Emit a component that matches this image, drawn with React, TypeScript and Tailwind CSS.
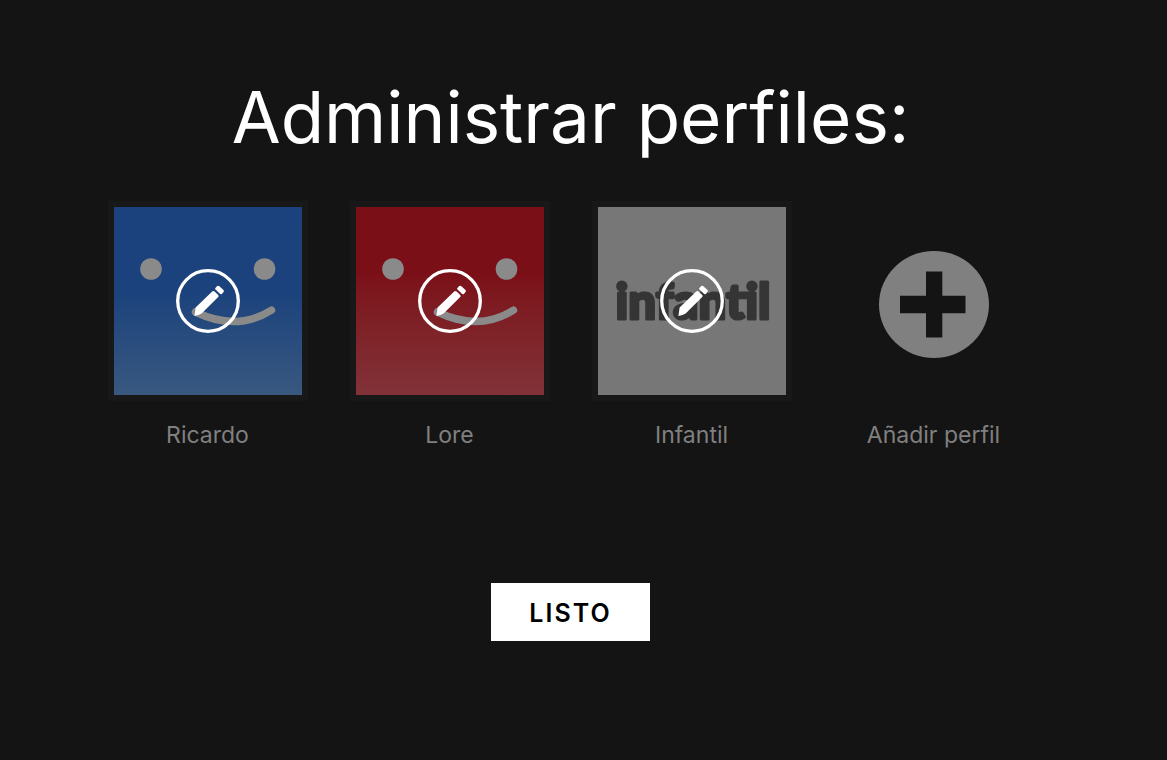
import type { ReactNode } from 'react';

const PencilBadge = () => (
  <svg viewBox="0 0 64 64" className="absolute inset-0 m-auto size-16" aria-hidden="true">
    <circle cx="32" cy="32" r="30.3" fill="none" stroke="#fff" strokeWidth="3.3" />
    <path
      d="M18.4 47 L19.6 38.6 L36.2 22.4 Q37.4 21.4 38.6 22.5 L42.2 26 Q43.2 27 42.2 28 L25.6 44.6 Q23 46.4 18.4 47 Z"
      fill="#fff"
    />
    <path
      d="M39.4 18.9 L41.2 17.1 Q42.3 16.2 43.4 17.2 L47.5 21 Q48.4 22 47.5 23.1 L45.9 24.9 Q44.9 25.7 43.9 24.8 L39.5 20.6 Q38.6 19.7 39.4 18.9 Z"
      fill="#fff"
    />
  </svg>
);

const Smile = () => (
  <svg viewBox="0 0 188 188" className="absolute inset-0 size-full" aria-hidden="true">
    <circle cx="37" cy="62" r="10.8" fill="#8a8a8a" />
    <circle cx="150.5" cy="62" r="10.8" fill="#8a8a8a" />
    <path d="M81.5 105 Q123 125 157.5 103.2" fill="none" stroke="#8a8a8a" strokeWidth="7.5" strokeLinecap="round" />
  </svg>
);

const KidsLogo = () => (
  <svg viewBox="0 0 188 188" className="absolute inset-0 size-full" aria-hidden="true">
    <text
      x="95"
      y="112"
      textAnchor="middle"
      fill="#353535"
      stroke="#353535"
      strokeWidth="3"
      strokeLinejoin="round"
      className="font-['Lato','Liberation_Sans',sans-serif] text-[49px] font-black"
    >
      infantil
    </text>
  </svg>
);

type Profile = { name: string; tile: string; art: ReactNode };

const profiles: Profile[] = [
  {
    name: 'Ricardo',
    tile: 'bg-linear-to-b from-[#1b427c] from-45% to-[#38587f]',
    art: <Smile />,
  },
  {
    name: 'Lore',
    tile: 'bg-linear-to-b from-[#7b0f18] from-35% to-[#813238]',
    art: <Smile />,
  },
  {
    name: 'Infantil',
    tile: 'bg-[#777777]',
    art: <KidsLogo />,
  },
];

export default function App() {
  return (
    <main className="flex min-h-screen flex-col items-center bg-[#141414] pt-[72px] pr-[26px] font-['Inter','Liberation_Sans',sans-serif]">
      <h1 className="text-center text-[71px] leading-[90px] text-white">Administrar perfiles:</h1>

      <ul className="mt-[39px] flex justify-center gap-[42px]">
        {profiles.map((p) => (
          <li key={p.name}>
            <a href="#" className="flex w-[200px] flex-col items-center">
              <span className="block border-6 border-[#181818]">
                <span className={`relative block size-[188px] overflow-hidden ${p.tile}`}>
                  {p.art}
                  <PencilBadge />
                </span>
              </span>
              <span className="mt-5 text-[23px] leading-7 text-[#808080]">{p.name}</span>
            </a>
          </li>
        ))}
        <li>
          <button type="button" className="flex w-[200px] flex-col items-center">
            <span className="flex h-[200px] items-center justify-center pt-[6px]">
              <svg viewBox="0 0 110 107" className="h-[107px] w-[110px]" aria-hidden="true">
                <ellipse cx="55" cy="53.5" rx="55" ry="53.5" fill="#808080" />
                <path d="M47 20.5h16.3v24.2h23.2v17.6H63.3v24.2H47V62.3H21V44.7h26z" fill="#141414" />
              </svg>
            </span>
            <span className="mt-5 text-[23px] leading-7 text-[#808080]">Añadir perfil</span>
          </button>
        </li>
      </ul>

      <button
        type="button"
        className="mt-[134px] h-[58px] bg-white px-[38px] pt-1 text-[25px] font-semibold tracking-[2px] text-black"
      >
        LISTO
      </button>
    </main>
  );
}
